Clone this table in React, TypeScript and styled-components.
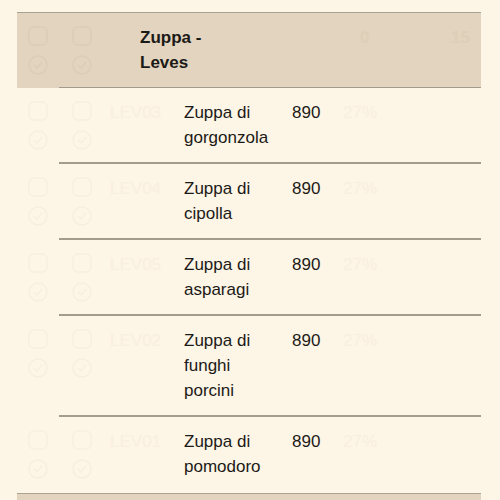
import React from "react";
import styled, { createGlobalStyle } from "styled-components";

const GlobalStyle = createGlobalStyle`
  html, body {
    margin: 0;
    background: #fdf5e6;
  }
  body {
    font-family: "Liberation Sans", Arial, sans-serif;
    color: #1c1a17;
  }
`;

const Page = styled.div`
  padding: 12px 0 0 17px;
  width: 464px;
`;

const GRID = "93px 74px 108px 51px 1fr";

const HeaderRow = styled.div`
  display: grid;
  grid-template-columns: ${GRID};
  border-top: 1px solid #aaa293;
  background-color: #e2d4be;
  background-image: linear-gradient(#a39c8e, #a39c8e);
  background-repeat: no-repeat;
  background-position: 42px 100%;
  background-size: calc(100% - 42px) 1px;
  padding: 12px 0 13px;
  font-size: 17px;
  line-height: 25px;
`;

const Row = styled.div`
  display: grid;
  grid-template-columns: ${GRID};
  padding: 12px 0 14px;
  font-size: 17px;
  line-height: 25px;
  background-image: linear-gradient(#a39c8e, #a39c8e);
  background-repeat: no-repeat;
  background-position: 42px 100%;
  background-size: calc(100% - 42px) 2px;

  &:last-of-type {
    background-image: none;
  }
`;

const IconCell = styled.div<{ $head?: boolean }>`
  display: grid;
  grid-template-columns: 20px 20px;
  column-gap: 24px;
  row-gap: 9px;
  padding: 1px 0 0 11px;
  height: 50px;
  box-sizing: border-box;
  align-content: start;
  opacity: ${(p) => (p.$head ? 0.05 : 0.035)};
`;

const GhostText = styled.div`
  color: #f8efe0;
`;

const HeadTitle = styled.div`
  grid-column: 2 / span 2;
  padding-left: 30px;
  width: 80px;
  font-weight: bold;
`;

const Name = styled.div`
  padding-right: 12px;
`;

const Price = styled.div``;

const HeadNumbers = styled.div`
  grid-column: 4 / span 2;
  display: flex;
  justify-content: space-between;
  padding: 0 11px 0 68px;
  color: #ddcfb8;
  font-weight: bold;
`;

const SquareIcon = () => (
  <svg width="20" height="20" viewBox="0 0 20 20">
    <rect x="1" y="1" width="18" height="18" rx="5" fill="none" stroke="#6b5a3e" strokeWidth="1.5" />
  </svg>
);

const CircleIcon = () => (
  <svg width="20" height="20" viewBox="0 0 20 20">
    <circle cx="10" cy="10" r="9" fill="none" stroke="#6b5a3e" strokeWidth="1.5" />
    <path d="M6 10l3 3 5-6" fill="none" stroke="#6b5a3e" strokeWidth="1.5" />
  </svg>
);

const Icons = ({ head }: { head?: boolean }) => (
  <IconCell $head={head}>
    <SquareIcon />
    <SquareIcon />
    <CircleIcon />
    <CircleIcon />
  </IconCell>
);

const soups = [
  { code: "LEV03", name: "Zuppa di gorgonzola" },
  { code: "LEV04", name: "Zuppa di cipolla" },
  { code: "LEV05", name: "Zuppa di asparagi" },
  { code: "LEV02", name: "Zuppa di funghi porcini" },
  { code: "LEV01", name: "Zuppa di pomodoro" },
];

const App = () => {
  return (
    <React.Fragment>
      <GlobalStyle />
      <Page>
        <HeaderRow>
          <Icons head />
          <HeadTitle>Zuppa - Leves</HeadTitle>
          <HeadNumbers>
            <span>0</span>
            <span>15</span>
          </HeadNumbers>
        </HeaderRow>
        <div>
          {soups.map((s) => (
            <Row key={s.code}>
              <Icons />
              <GhostText>{s.code}</GhostText>
              <Name>{s.name}</Name>
              <Price>890</Price>
              <GhostText>27%</GhostText>
            </Row>
          ))}
        </div>
        <HeaderRow>
          <Icons head />
        </HeaderRow>
      </Page>
    </React.Fragment>
  );
};

export default App;
